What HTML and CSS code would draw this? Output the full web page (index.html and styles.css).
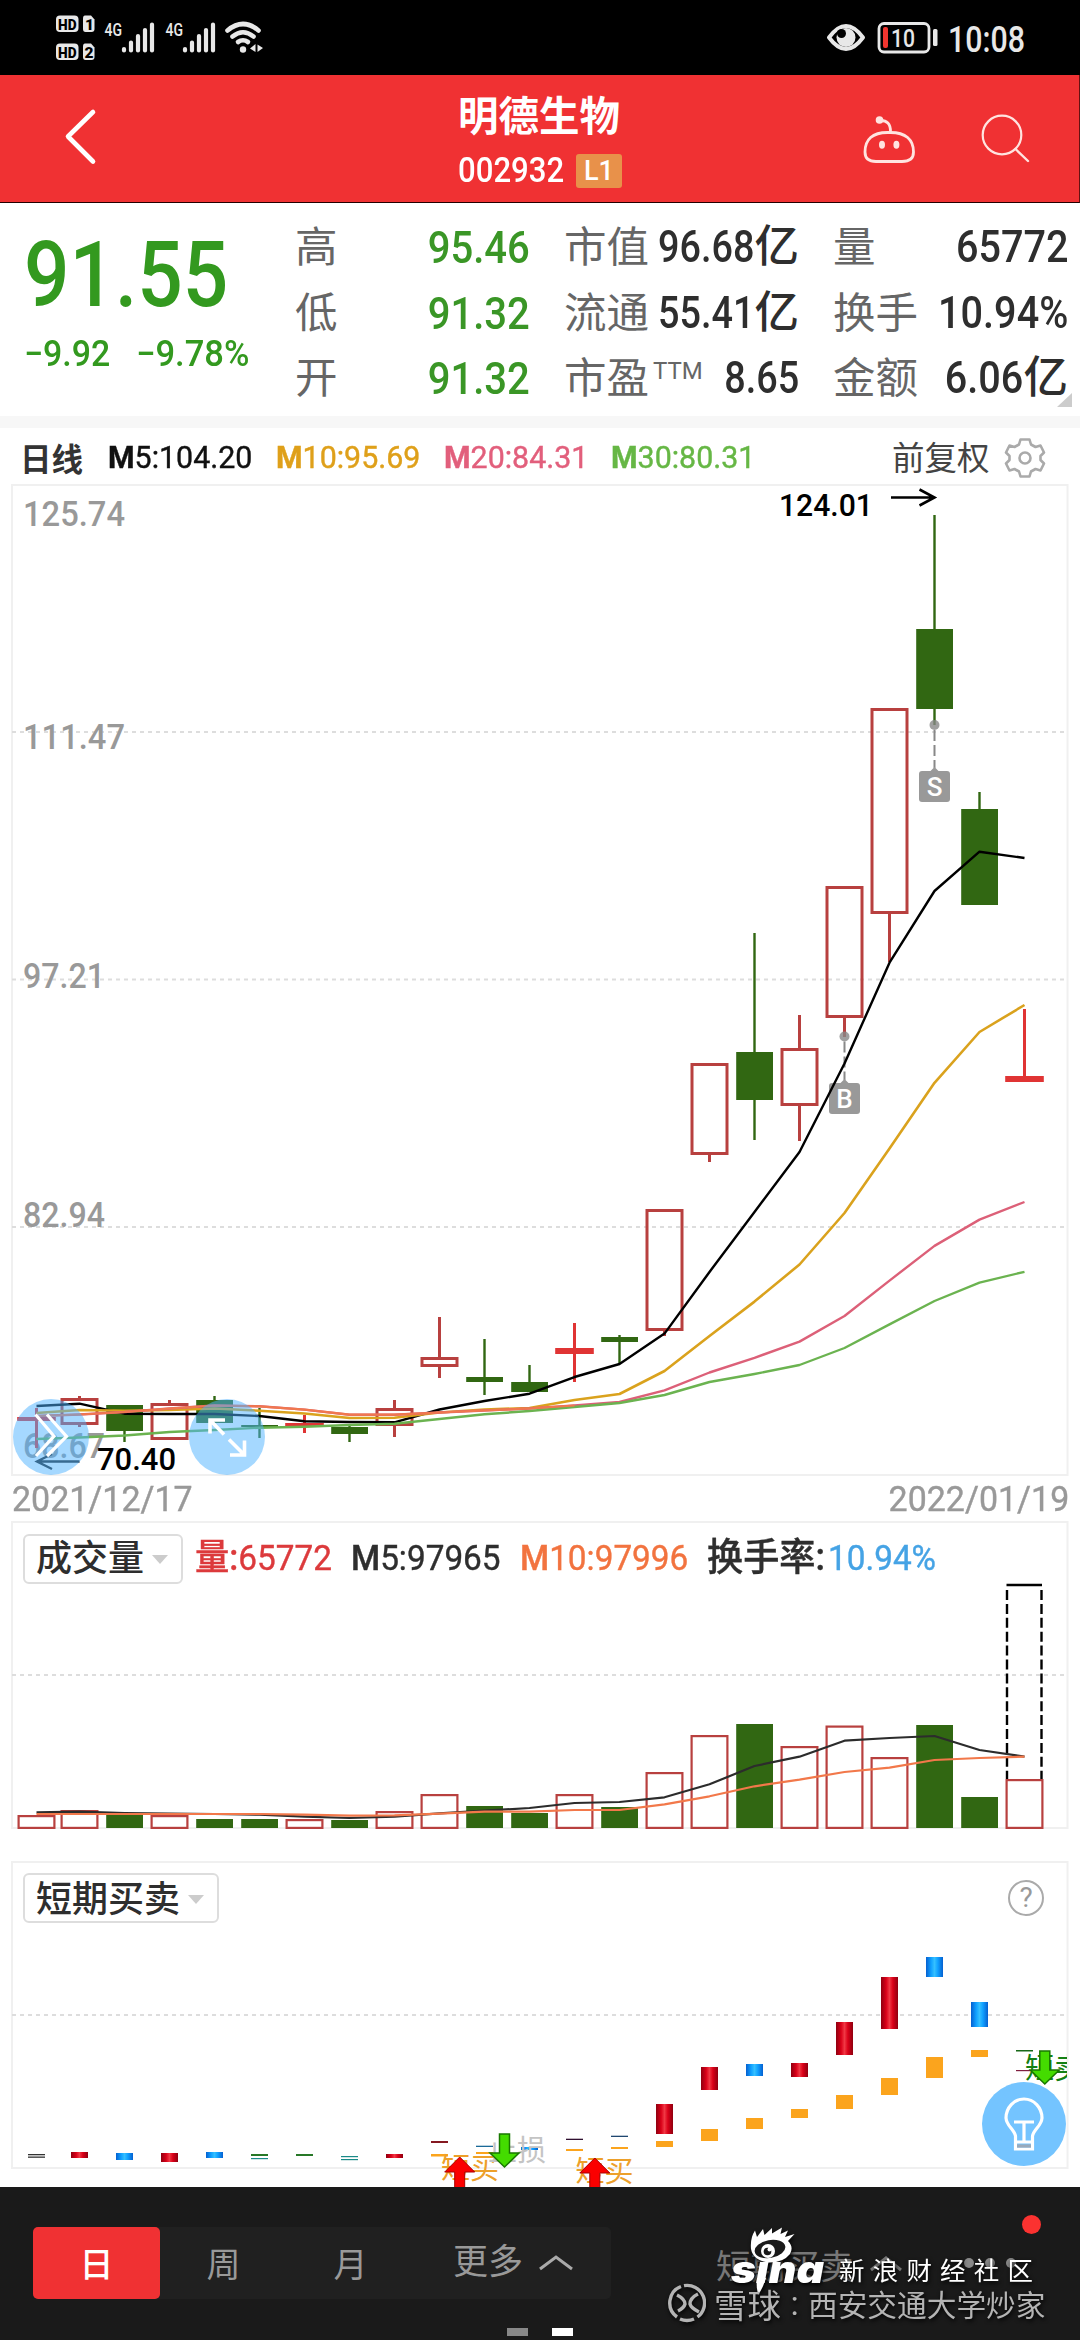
FILE: index.html
```html
<!DOCTYPE html>
<html lang="zh-CN">
<head>
<meta charset="utf-8">
<title>明德生物 002932</title>
<link rel="stylesheet" href="styles.css">
</head>
<body>
<div class="status">
  <svg class="status-left" width="280" height="75" viewBox="0 0 280 75">
    <g fill="#e8e8e8">
      <rect x="56" y="15.5" width="22.5" height="16.5" rx="4"/>
      <path d="M85 15.5h6l3.500 4v9.500q0 3-3 3h-6q-2.500 0-2.500-3v-10.500q0-3 2-3z"/>
      <rect x="56" y="43.500" width="22.500" height="16.500" rx="4"/>
      <path d="M85 43.500h6l3.500 4v9.500q0 3-3 3h-6q-2.500 0-2.500-3v-10.500q0-3 2-3z"/>
    </g>
    <g class="tiny">
      <text x="58" y="29.500" textLength="18.500" lengthAdjust="spacingAndGlyphs">HD</text>
      <text x="85" y="29.500">1</text>
      <text x="58" y="57.500" textLength="18.500" lengthAdjust="spacingAndGlyphs">HD</text>
      <text x="84.500" y="57.500">2</text>
    </g>
    <g class="net">
      <text x="104.500" y="35.500" textLength="17.500" lengthAdjust="spacingAndGlyphs">4G</text>
      <text x="165.500" y="35.500" textLength="17.500" lengthAdjust="spacingAndGlyphs">4G</text>
    </g>
    <g stroke="#e8e8e8" stroke-width="4.200" stroke-linecap="round">
      <path d="M124 49v1.500M131 42.500v8M138 36v14.500M145 30v20.500M152 24.500v26"/>
      <path d="M185 49v1.500M192 42.500v8M199 36v14.500M206 30v20.500M213 24.500v26"/>
    </g>
    <g fill="none" stroke="#e8e8e8" stroke-width="4.600" stroke-linecap="round">
      <path d="M227.500 30.500Q243 17.500 258.500 30.500"/>
      <path d="M232.500 36.500Q243 28 253.500 36.500"/>
      <path d="M238 42Q243 38.500 248 42"/>
    </g>
    <circle cx="243" cy="49.500" r="3.200" fill="#e8e8e8"/>
    <path d="M255.500 44v8l-5.500-3.500zM257.500 44.500v7.500l5.500-4z" fill="#e8e8e8"/>
  </svg>
  <svg class="status-right" width="260" height="75" viewBox="820 0 260 75">
    <path d="M829 37.500Q846 14.500 863 37.500Q846 60.500 829 37.500z" fill="none" stroke="#e8e8e8" stroke-width="4" stroke-linejoin="round"/>
    <circle cx="846" cy="37.500" r="9.500" fill="#e8e8e8"/><circle cx="841.500" cy="33.500" r="4.500" fill="#000"/>
    <rect x="879" y="23.500" width="50" height="28.500" rx="5" fill="none" stroke="#e8e8e8" stroke-width="2.800"/>
    <rect x="933" y="29" width="4.500" height="17" rx="1.500" fill="#e8e8e8"/>
    <rect x="883" y="27" width="5" height="21" rx="2" fill="#f0352f"/>
    <text x="891" y="47" class="batt" textLength="24" lengthAdjust="spacingAndGlyphs">10</text>
    <text x="948" y="51.500" class="clock" textLength="77" lengthAdjust="spacingAndGlyphs">10:08</text>
  </svg>
</div>

<header class="header">
  <svg width="60" height="60" viewBox="50 106 60 60" class="back"><path d="M93 112L68 136.500L93 161.500" fill="none" stroke="#fff" stroke-width="4.600" stroke-linecap="round" stroke-linejoin="round"/></svg>
  <div class="title">
    <div class="name">明德生物</div>
    <div class="code"><span class="num">002932</span><b class="level">L1</b></div>
  </div>
  <svg width="180" height="60" viewBox="860 106 180 60" class="tools" fill="none" stroke="#ffe4e0" stroke-width="2.800" stroke-linecap="round">
    <path d="M888 132.500C905 132 912.500 140 912.500 152Q912.500 161.500 901 161.500H875Q864 161.500 864 152C864 140 871 132 888 132.500z"/>
    <path d="M879 120.500Q889.500 120 889.500 131.500"/>
    <circle cx="878.500" cy="120" r="2.400" fill="#ffe4e0"/>
    <ellipse cx="881" cy="144.700" rx="1.600" ry="2.600" fill="#ffe4e0"/><ellipse cx="895.400" cy="144.700" rx="1.600" ry="2.600" fill="#ffe4e0"/>
    <circle cx="1001" cy="135" r="19.300" stroke-width="2.200"/><path d="M1014.500 149L1027 161" stroke-width="2.400"/>
  </svg>
</header>

<section class="quote">
  <div class="price">
    <div class="last"><span class="num">91.55</span></div>
    <div class="delta"><span class="num">−9.92</span><span class="num pct">−9.78%</span></div>
  </div>
  <dl class="stats green">
    <dt>高</dt><dd><span class="num">95.46</span></dd>
    <dt>低</dt><dd><span class="num">91.32</span></dd>
    <dt>开</dt><dd><span class="num">91.32</span></dd>
  </dl>
  <dl class="stats cap">
    <dt>市值</dt><dd><span class="num">96.68</span>亿</dd>
    <dt>流通</dt><dd><span class="num">55.41</span>亿</dd>
    <dt>市盈<i>TTM</i></dt><dd><span class="num">8.65</span></dd>
  </dl>
  <dl class="stats turnover">
    <dt>量</dt><dd><span class="num">65772</span></dd>
    <dt>换手</dt><dd><span class="num">10.94%</span></dd>
    <dt>金额</dt><dd><span class="num">6.06</span>亿</dd>
  </dl>
  <span class="corner"></span>
</section>

<div class="ma-row">
  <b class="day">日线</b>
  <span class="ma black"><b>M</b>5:104.20</span>
  <span class="ma gold"><b>M</b>10:95.69</span>
  <span class="ma pink"><b>M</b>20:84.31</span>
  <span class="ma lime"><b>M</b>30:80.31</span>
  <span class="adjust">前复权</span>
  <svg width="42" height="42" viewBox="-21 -21 42 42" fill="none" stroke="#aaa" stroke-width="2.600" stroke-linejoin="round">
    <path d="M-4.500-18.500H4.500L6-13.500L10.500-11L15.500-12.500L19-5.500L15.500-2V2L19 5.500L15.500 12.500L10.500 11L6 13.500L4.500 18.500H-4.500L-6 13.500L-10.500 11L-15.500 12.500L-19 5.500L-15.500 2V-2L-19-5.500L-15.500-12.500L-10.500-11L-6-13.500z"/>
    <circle r="5.500"/>
  </svg>
</div>

<section class="chart">
  <svg id="kline" width="1080" height="992" viewBox="0 484 1080 992"></svg>
  <button class="round expand" aria-label="展开"><svg width="76" height="76" viewBox="13 1398.500 76 76" fill="none" stroke="#fff" stroke-width="3.200"><path d="M35.500 1414L54 1435.700L36 1455.500M47 1414L66.500 1436L47 1455.500"/></svg></button>
  <button class="round full" aria-label="全屏"><svg width="76" height="76" viewBox="189 1398.500 76 76" fill="none" stroke="#fff" stroke-width="3.600"><path d="M225 1419.500H210V1433M210.500 1420L224 1434M229 1439L244 1454M230 1454.500H244.500V1440"/></svg></button>
</section>
<div class="dates"><span class="num">2021/12/17</span><span class="num">2022/01/19</span></div>

<section class="panel volume">
  <svg id="vol" width="1080" height="340" viewBox="0 1521 1080 340"></svg>
  <div class="panel-head">
    <span class="select">成交量<i></i></span>
    <span class="v red"><b>量:</b>65772</span>
    <span class="v dark"><b>M</b>5:97965</span>
    <span class="v orange"><b>M</b>10:97996</span>
    <span class="v turn"><b class="dark">换手率:</b><em>10.94%</em></span>
  </div>
</section>

<section class="panel signal">
  <svg id="sig" width="1080" height="326" viewBox="0 1861 1080 326"></svg>
  <div class="panel-head">
    <span class="select wide">短期买卖<i></i></span>
    <span class="help">?</span>
  </div>
  <button class="bulb" aria-label="提示"><svg width="84" height="84" viewBox="-42 -42 84 84" fill="none" stroke="#fff" stroke-width="3.200"><path d="M-8.500 12C-10 5-17.500 2-18-6A18 19 0 0 1 18-6C17.500 2 10 5 8.500 12V25H-8.500zM-10-2H10M0-2V18M-8 18H8"/><path d="M-7 22H7" stroke="#9ab"/></svg></button>
</section>

<footer class="bottom">
  <nav class="seg"><a class="on">日</a><a>周</a><a>月</a><a class="more">更多<svg width="36" height="16" viewBox="0 0 36 16"><path d="M2 14L18 2L34 14" fill="none" stroke="#aaa" stroke-width="3"/></svg></a></nav>
  <div class="pick">短期买卖<svg width="34" height="16" viewBox="0 0 34 16"><path d="M2 14L17 2L32 14" fill="none" stroke="#777" stroke-width="3"/></svg></div>
  <div class="dots"><i></i><i></i><i></i></div>
  <span class="badge"></span>
  <span class="page p1"></span><span class="page p2"></span>
  <div class="sina">
    <svg width="110" height="82" viewBox="722 2222 110 82">
      <path d="M751 2249Q750 2238 755 2230.500L757 2237L763 2229L764.500 2235L772 2228L772 2233.500L782 2227.500L780.500 2234L788 2230.500L785 2237L794.500 2234L788 2241Q794 2247 790 2254Q783 2263 768 2262.500Q753 2260 751 2249z" fill="#fff"/>
      <ellipse cx="770" cy="2249" rx="15.500" ry="9" fill="#1a1a1a" transform="rotate(-10 770 2249)"/>
      <circle cx="768" cy="2251" r="7" fill="#fff"/><circle cx="767.500" cy="2251.500" r="3.800" fill="#1a1a1a"/><circle cx="769.500" cy="2249.500" r="2" fill="#fff"/>
      <text x="731" y="2282.500" class="sina-word" textLength="93" lengthAdjust="spacingAndGlyphs">sına</text>
      <path d="M757 2278L766 2278Q763 2288 758 2295Q756 2287 757 2278z" fill="#fff"/>
    </svg>
    <span>新浪财经社区</span>
  </div>
  <div class="xq">
    <svg width="38" height="40" viewBox="-19 -20 38 40" fill="none" stroke="#b4b4b4" stroke-width="3.400"><path d="M-6-16.500A17.500 17.500 0 0 0-10 14M-3-17.300A17.500 17.500 0 0 1 10.500 14M-7 16A17.500 17.500 0 0 0 7 16"/><path d="M-10-8Q-2-4-2 1Q-3 5-9 8M11-9Q3-5 3 1Q4 5 12 9"/></svg>
    <span class="xq-name">雪球</span><span class="xq-colon">:</span><span class="xq-user">西安交通大学炒家</span>
  </div>
</footer>
<script src="script.js"></script>
</body>
</html>
```
FILE: styles.css
```css
* { box-sizing: border-box; }
body { margin: 0; width: 1080px; height: 2340px; overflow: hidden; background: #fff; font-family: Roboto, "Noto Sans CJK SC", sans-serif; color: #2e2e2e; }
svg { display: block; flex: none; }
dl, dt, dd { margin: 0; }
i, em { font-style: normal; }
button { border: 0; padding: 0; }
.num { display: inline-block; transform: scaleX(.89); transform-origin: left; white-space: nowrap; }

.status { height: 75px; background: #000; display: flex; justify-content: space-between; }
.tiny text { font: 900 15.5px Roboto, sans-serif; fill: #000; }
.net text { font: 500 18.5px Roboto, sans-serif; fill: #e8e8e8; }
.batt { font: 500 26.5px Roboto, sans-serif; fill: #e8e8e8; }
.clock { font: 500 36px Roboto, sans-serif; fill: #e8e8e8; }

.header { height: 128px; background: #f03133; border-bottom: 1px solid #200; border-right: 1px solid #611; display: flex; align-items: center; padding: 0 38px 0 50px; }
.back { margin-top: -5px; }
.title { width: 170px; margin-left: 348px; color: #fff; padding-top: 6px; }
.name { font-size: 40.5px; font-weight: 700; line-height: 48px; white-space: nowrap; }
.code { display: flex; align-items: center; font-size: 35px; font-weight: 500; line-height: 40px; height: 40px; margin-top: 10px; }
.code .num { width: 118px; }
.level { width: 46px; height: 34px; line-height: 34px; border-radius: 3px; background: #e8914a; font-size: 27px; font-weight: 500; text-align: center; }
.tools { margin: -5px 0 0 auto; }

.quote { height: 225px; padding: 12px 12px 0 24px; border-bottom: 12px solid #f7f7f7; display: grid; grid-template-columns: 271px 235px 34px 235px 34px 235px; position: relative; }
.cap { grid-column: 4; }
.turnover { grid-column: 6; }
.price { color: #33991f; font-weight: 500; }
.last { font-size: 90px; line-height: 100px; margin-top: 11px; }
.delta { display: flex; font-size: 36px; line-height: 40px; margin-top: 8px; }
.delta .num { width: 112px; transform: scaleX(.94); }
.delta .pct { transform: scaleX(.96); }
.stats { display: grid; grid-template-columns: auto 1fr; grid-auto-rows: 65.6px; align-items: center; line-height: 65.6px; font-size: 45px; white-space: nowrap; }
.stats dt { font-size: 42.5px; color: #666; display: flex; }
.stats dt i { font-size: 24px; line-height: 50px; margin-left: 4px; }
.stats dd { display: flex; justify-content: flex-end; font-weight: 500; font-size: 45px; min-width: 0; }
.stats dd .num { transform-origin: right; }
.stats.cap .num { transform: scaleX(.85); }
.stats.green dd { color: #3a9626; }
.stats.cap dd, .stats.turnover dd { font-size: 44.5px; }
.corner { position: absolute; right: 8px; bottom: 9px; border-left: 15px solid transparent; border-bottom: 14px solid #ccc; }

.ma-row { height: 56px; display: grid; grid-template-columns: 88px 168px 168px 167px 281px 112px 42px; align-items: center; padding: 3px 0 0 20px; font-size: 31px; white-space: nowrap; }
.day { font-size: 31.5px; font-weight: 700; color: #333; margin-top: -2px; }
.ma { transform: scaleX(.98); transform-origin: left; font-weight: 400; -webkit-text-stroke: .4px; }
.ma b { font-weight: 700; }
.black { color: #111; } .gold { color: #dfa01a; } .pink { color: #e25f7c; } .lime { color: #66b745; }
.adjust { font-size: 32.5px; color: #444; margin-top: -4px; }

.chart { height: 992px; position: relative; }
.round { position: absolute; top: 914.5px; width: 76px; height: 76px; border-radius: 50%; background: rgba(75, 178, 255, .5); }
.expand { left: 13px; } .full { left: 189px; }
.dates { height: 45px; padding: 2px 11px 0 12px; display: flex; justify-content: space-between; align-items: center; font-size: 35px; color: #999; -webkit-text-stroke: .4px; }
.dates .num { transform: scaleX(.97); }
.dates .num:last-child { transform-origin: right; }

.panel { display: grid; position: relative; }
.panel > svg, .panel-head { grid-area: 1 / 1; }
.volume { height: 340px; } .signal { height: 326px; }
.panel-head { height: 50px; margin: 12px 36px 0 23px; display: grid; grid-template-columns: 172px 156px 169px 187px 1fr; align-items: center; font-size: 35px; line-height: 50px; white-space: nowrap; position: relative; }
.select { width: 160px; height: 50px; border: 2px solid #ddd; border-radius: 6px; display: flex; align-items: center; padding-left: 11px; font-size: 36px; line-height: 44px; font-weight: 500; color: #2e2e2e; }
.select.wide { width: 196px; }
.select i { border: 8px solid transparent; border-top: 9px solid #ccc; border-bottom: 0; margin-left: 8px; }
.signal .panel-head { display: flex; justify-content: space-between; }
.volume .panel-head { margin-top: 13px; }
.signal .select { padding-top: 3px; }
.help { width: 36px; height: 36px; border: 2.5px solid #aaa; border-radius: 50%; color: #999; font-size: 28px; line-height: 32px; text-align: center; }
.v { height: 50px; transform: scaleX(.952); transform-origin: left; -webkit-text-stroke: .4px; }
.v b { font-weight: 500; }
.red { color: #dc3a3c; } .dark { color: #2e2e2e; } .orange { color: #f2733f; } .turn em { color: #45a3e5; margin-left: 3px; }
.turn b { font-size: 38px; line-height: 1; }
.red b { font-size: 36px; line-height: 1; }
.bulb { position: absolute; left: 982px; top: 221px; width: 84px; height: 84px; border-radius: 50%; background: #74c4ff; }

.axis { font: 500 35px Roboto, sans-serif; fill: #999; }
.mark { font: 500 31px Roboto, sans-serif; fill: #000; }
.tag { font: 500 26px Roboto, sans-serif; fill: #fff; text-anchor: middle; }
.word { font: 400 29px "Noto Sans CJK SC", sans-serif; }

.bottom { height: 153px; background: #1a1a1a; position: relative; display: flex; align-items: flex-start; padding: 39.5px 0 0 33px; color: #999; font-size: 34px; }
.seg { width: 578px; height: 72px; background: #202020; border-radius: 5px; display: grid; grid-template: 72px / 127px 127px 127px 1fr; line-height: 76px; text-align: center; }
.seg .on { background: #f03133; color: #fff; border-radius: 5px; font-weight: 500; }
.more { display: flex; align-items: center; padding-left: 39px; gap: 15px; font-size: 35px; }
.pick { display: flex; align-items: center; gap: 15px; height: 74px; margin-left: 105px; color: #777; white-space: nowrap; font-size: 34.5px; }
.dots { display: flex; gap: 11px; height: 72px; align-items: center; margin-left: 61px; }
.dots i { width: 10px; height: 10px; border-radius: 50%; background: #888; }
.badge { position: absolute; left: 1022px; top: 28px; width: 19px; height: 19px; border-radius: 50%; background: #fb3230; }
.page { position: absolute; top: 141px; width: 21px; height: 8px; }
.p1 { left: 507px; background: #888; } .p2 { left: 552px; background: #fff; }
.sina { position: absolute; left: 722px; top: 35px; display: flex; color: #fff; filter: drop-shadow(1px 2px 2px #000); }
.sina span { font-size: 25.5px; line-height: 30px; letter-spacing: 8.2px; margin: 34px 0 0 7px; white-space: nowrap; }
.sina-word { font: italic 900 39px Inter, sans-serif; fill: #fff; }
.xq { position: absolute; left: 668px; top: 96px; display: flex; align-items: center; height: 40px; color: #b4b4b4; white-space: nowrap; filter: drop-shadow(1px 2px 2px #000); }
.xq-name { font-size: 33.5px; margin-left: 8px; } .xq-colon { width: 27px; text-align: center; } .xq-user { font-size: 29.7px; }
```
FILE: script.js
```js
const RED = '#b8403f', BRIGHT = '#e03434', GREEN = '#316712';
const cx = i => (i === 0 ? 36.5 : 34.5 + 45 * i);
const path = (ys, color, w) =>
  `<polyline points="${ys.map((y, i) => cx(i) + ',' + y).join(' ')}" fill="none" stroke="${color}" stroke-width="${w}" stroke-linejoin="round"/>`;
const rect = (x, y, w, h, f) => `<rect x="${x}" y="${y}" width="${w}" height="${h}" fill="${f}"/>`;
const grid = y => `<path d="M12 ${y}H1067" stroke="#ddd" stroke-width="2" stroke-dasharray="4 4"/>`;
const hollow = (i, t, b, w = 3) =>
  `<rect x="${cx(i) - 19 + w / 2}" y="${t + w / 2}" width="${38 - w}" height="${b - t - w}" fill="none" stroke="${RED}" stroke-width="${w}"/>`;

// kind, high, body top, body bottom, low
const days = [
  ['f', 1408, 1417, 1421, 1448], ['r', 1396, 1398, 1425, 1427], ['g', 1405, 1405, 1431, 1442],
  ['r', 1400, 1403, 1440, 1440], ['g', 1396, 1400, 1423, 1423], ['g', 1408, 1425, 1427, 1438],
  ['f', 1415, 1423, 1427, 1433], ['g', 1424, 1427, 1434, 1442], ['r', 1400, 1408, 1426, 1437],
  ['r', 1317, 1357, 1367, 1378], ['g', 1339, 1377, 1382, 1395], ['g', 1365, 1382, 1392, 1392],
  ['f', 1323, 1348, 1354, 1382], ['g', 1335, 1337, 1342, 1363], ['r', 1209, 1209, 1331, 1336],
  ['r', 1063, 1063, 1155, 1162], ['g', 933, 1052, 1100, 1140], ['r', 1015, 1048, 1106, 1141],
  ['r', 886, 886, 1018, 1037], ['r', 708, 708, 914, 962], ['g', 515, 629, 709, 725],
  ['g', 792, 809, 905, 905], ['f', 1009, 1076, 1082, 1082]
];
const ma5 = [1406, 1403.7, 1413.7, 1414, 1414, 1416, 1421.3, 1422, 1422.3, 1409.5, 1401, 1393.7, 1377, 1364, 1333.6, 1272, 1212, 1152, 1063.5, 962.7, 891, 851.7, 858];
const ma10 = [1413, 1410, 1410.7, 1410, 1408.5, 1410.7, 1413.5, 1418, 1417.7, 1412.5, 1409.5, 1408, 1400, 1394, 1371, 1336, 1301.6, 1264.5, 1213, 1148.4, 1082.8, 1032, 1005];
const ma20 = [1416, 1414.5, 1412, 1408.5, 1405.5, 1406.3, 1409.6, 1414.7, 1414.7, 1412.5, 1410.5, 1408.5, 1405.5, 1402, 1390.4, 1372.5, 1357.8, 1341.6, 1316, 1280.6, 1245.9, 1219.6, 1202];
const ma30 = [1439, 1437.5, 1435.5, 1432, 1430, 1427.7, 1426.7, 1425, 1423.7, 1419, 1414.3, 1411, 1407, 1403, 1395, 1382, 1374, 1365, 1348, 1324.4, 1301, 1282.7, 1271.8];

let k = `<rect x="12" y="485" width="1055.500" height="990" fill="none" stroke="#f0f0f0" stroke-width="2"/>` + [732, 979.5, 1227].map(grid).join('');
[['125.74', 526, 102], ['111.47', 749, 102], ['97.21', 988, 82], ['82.94', 1227, 82], ['68.67', 1458, 82]].forEach(([t, y, w]) => {
  k += `<text class="axis" x="23" y="${y}" textLength="${w}" lengthAdjust="spacingAndGlyphs">${t}</text>`;
});
days.forEach(([kind, h, t, b, l], i) => {
  const c = kind === 'g' ? GREEN : kind === 'r' ? RED : BRIGHT, w = kind === 'g' ? 2.4 : 3, x = cx(i);
  k += rect(x - w / 2, h, w, t - h, c) + rect(x - w / 2, b, w, l - b, c);
  if (kind === 'r') k += hollow(i, t, b);
  else if (kind === 'g') k += rect(x - 18.3, t, 36.8, b - t, c);
  else k += rect(x - 19.3, t, 38.6, b - t, c);
});
const tag = (x, dot, top, s) =>
  `<circle cx="${x}" cy="${dot}" r="5" fill="#888" opacity=".8"/><path d="M${x} ${dot + 5}V${top - 4}" stroke="#888" stroke-width="2" stroke-dasharray="11 4"/>` +
  `<path d="M${x - 5} ${top}L${x} ${top - 5}L${x + 5} ${top}z" fill="#999"/><rect x="${x - 15.5}" y="${top - 1}" width="31" height="31" rx="3" fill="#999"/><text class="tag" x="${x}" y="${top + 24}">${s}</text>`;
k += tag(844.5, 1036.5, 1084, 'B') + tag(934.5, 725, 772, 'S');
k += path(ma5, '#000', 2.4) + path(ma10, '#daa21d', 2.6) + path(ma20, '#dc6078', 2.4) + path(ma30, '#6bb350', 2.4);
k += path(ma20.slice(0, 13), '#f0784e', 2.2);
k += `<text class="mark" x="779" y="516" textLength="94" lengthAdjust="spacingAndGlyphs">124.01</text><path d="M891 497.500H934M919.500 489.500L934.500 497.500L919.500 505.500" fill="none" stroke="#000" stroke-width="2.600"/>`;
k += `<text class="mark" x="97" y="1469.500" textLength="79" lengthAdjust="spacingAndGlyphs">70.40</text><path d="M79.500 1461.500H37M52 1454L37 1461.500L52 1469" fill="none" stroke="#222" stroke-width="2.400"/>`;
document.getElementById('kline').innerHTML = k;

const tops = [1815, 1810, 1815, 1815, 1819, 1819, 1819, 1820, 1811, 1794, 1806, 1813, 1794, 1807, 1772, 1735, 1724, 1746, 1725.5, 1757, 1725, 1797, 1779];
const vol5 = [1812.3, 1811.7, 1813, 1813.7, 1814, 1814.7, 1816.7, 1818, 1816.7, 1813.3, 1810.7, 1808, 1803, 1802, 1797.3, 1784.3, 1766, 1756.7, 1740.7, 1738, 1736, 1750, 1756.7];
const vol10 = [1814, 1814, 1814, 1814, 1814, 1814, 1814.7, 1815.7, 1815.3, 1813.7, 1811.7, 1811.7, 1810, 1810, 1804.3, 1796.3, 1786.3, 1779.7, 1772, 1767.7, 1760, 1758, 1756.7];
let v = `<path d="M12 1828V1522H1067.500V1828z" fill="none" stroke="#f0f0f0" stroke-width="2"/>` + grid(1675);
tops.forEach((t, i) => {
  v += days[i][0] === 'g' ? rect(cx(i) - 18.3, t, 36.8, 1828 - t, GREEN) : hollow(i, t, 1829, 2.2);
});
v += `<path d="M1006.500 1585H1042" stroke="#000" stroke-width="2.400"/><path d="M1007 1590V1779M1041.500 1590V1779" stroke="#000" stroke-width="2.400" stroke-dasharray="10 3.900"/>`;
v += path(vol5, '#2c2c2c', 2.2) + path(vol10, '#f2784a', 2.2);
document.getElementById('vol').innerHTML = v;

const stops = (id, a, b, c) => `<linearGradient id="${id}"><stop offset="0" stop-color="${a}"/><stop offset=".3" stop-color="${b}"/><stop offset=".5" stop-color="${c}"/><stop offset=".7" stop-color="${b}"/><stop offset="1" stop-color="${a}"/></linearGradient>`;
const R = 'url(#gr)', B = 'url(#gb)', O = '#fba41d';
const bars = [
  [0, 2154, 2155.3, '#333'], [0, 2156.5, 2157.800, '#333'], [1, 2152, 2158, R], [2, 2153, 2160, B], [3, 2153, 2162, R], [4, 2152, 2158, B],
  [5, 2154, 2156, '#287828'], [5, 2158, 2159.200, '#1b8a88'], [6, 2154, 2156, '#287828'], [7, 2156, 2157.200, '#1b8a88'], [7, 2159, 2160.200, '#1b8a88'],
  [8, 2154, 2158, R], [9, 2141, 2143, '#851820'], [9, 2154, 2156.500, O], [10, 2145.7, 2147, '#1b6a98'], [10, 2152, 2154, O], [11, 2147, 2150, B],
  [12, 2138.7, 2140, '#301030'], [12, 2149, 2151, O], [13, 2135.7, 2137, '#204870'], [13, 2147, 2149, O],
  [14, 2104, 2134, R], [14, 2141, 2147, O], [15, 2067, 2090, R], [15, 2129, 2141, O], [16, 2064, 2076, B], [16, 2118, 2129, O],
  [17, 2063, 2077, R], [17, 2109, 2118, O], [18, 2022, 2055, R], [18, 2095, 2109, O], [19, 1977, 2029, R], [19, 2078, 2095, O],
  [20, 1957, 1977, B], [20, 2057, 2078, O], [21, 2002, 2027, B], [21, 2050, 2057, O], [22, 2050, 2051.500, '#186818'], [22, 2070, 2071.200, '#802040']
];
let s = `<defs>${stops('gr', '#8f0010', '#da0018', '#f03844')}${stops('gb', '#0560d0', '#10a0ff', '#35c0ff')}</defs>`;
s += `<rect x="12" y="1862" width="1055.500" height="306" fill="none" stroke="#f0f0f0" stroke-width="2"/>` + grid(2015);
bars.forEach(([i, t, b, f]) => { s += rect(cx(i) - 8.5, t, 17, b - t, f); });
const word = (x, y, t, c) => `<text class="word" x="${x}" y="${y}" fill="${c}">${t}</text>`;
const up = (x, y) => `<path d="M${x} ${y}L${x + 15} ${y + 15}H${x + 5}V2189H${x - 5}V${y + 15}H${x - 15}z" fill="#fb0000" stroke="#a80000"/>`;
const down = (x, y) => `<path d="M${x} ${y}L${x + 14.500} ${y - 14}H${x + 5}V${y - 33}H${x - 5}V${y - 14}H${x - 14.500}z" fill="#44dc00" stroke="#187800" stroke-width="1.500"/>`;
s += word(441, 2179, '短买', '#eda02a') + word(575.5, 2182, '短买', '#eda02a') + word(488, 2161, '止损', '#c4c4c4');
s += `<svg x="1020" y="2040" width="47" height="60" viewBox="1020 2040 47 60">${word(1025, 2079, '短卖', '#148014')}</svg>`;
s += up(459.7, 2157) + up(594.8, 2158) + down(504.5, 2167) + down(1044.8, 2084);
document.getElementById('sig').innerHTML = s;
```
